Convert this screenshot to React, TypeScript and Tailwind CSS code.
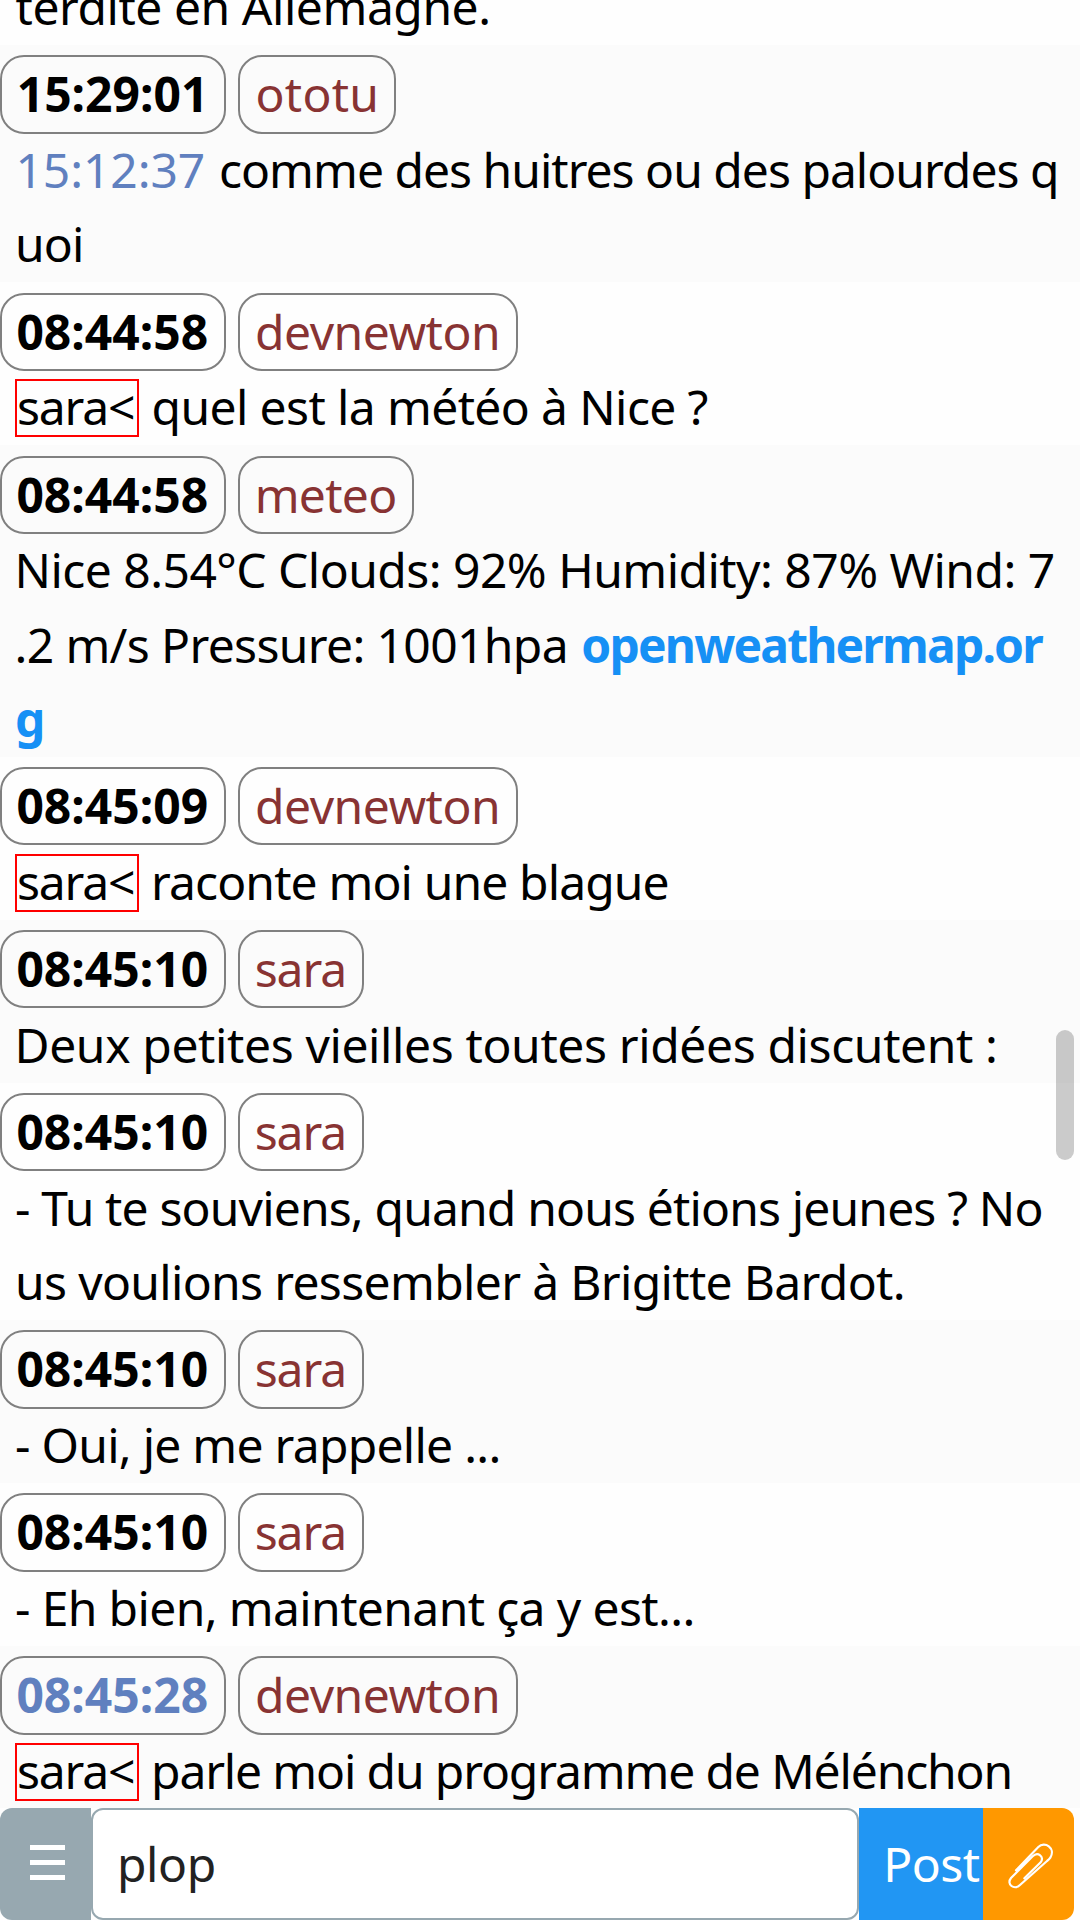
import React from "react";

type Segment = { text: string; className: string };
type Post = {
  time: string;
  timeClass: string;
  nick: string;
  nickClass: string;
  lines: Segment[][];
};

const sara: Segment = {
  text: "sara<",
  className: "mt-[1px] h-[58px] w-[124px] border-2 border-[#ff0000] leading-[52px] tracking-[-1.18px]",
};

const clock = "pl-[14.4px]";
const nicks = {
  ototu: "w-[157.7px] pl-[15.3px] tracking-[0.24px]",
  devnewton: "w-[279.7px] pl-[14.8px] tracking-[-0.5px]",
  meteo: "w-[175.5px] pl-[14.4px] tracking-[-0.71px]",
  sara: "w-[125.5px] pl-[14.4px] tracking-[-1.1px]",
};

const posts: Post[] = [
  {
    time: "15:29:01",
    timeClass: "pl-[14.7px]",
    nick: "ototu",
    nickClass: nicks.ototu,
    lines: [
      [
        { text: "15:12:37", className: "ml-[0.5px] w-[203.5px] text-[#6080bf] tracking-[-0.1px]" },
        { text: "comme des huitres ou des palourdes q", className: "tracking-[-0.99px]" },
      ],
      [{ text: "uoi", className: "tracking-[-0.85px]" }],
    ],
  },
  {
    time: "08:44:58",
    timeClass: clock,
    nick: "devnewton",
    nickClass: nicks.devnewton,
    lines: [[sara, { text: "quel est la météo à Nice ?", className: "ml-[12.6px] tracking-[-0.62px]" }]],
  },
  {
    time: "08:44:58",
    timeClass: clock,
    nick: "meteo",
    nickClass: nicks.meteo,
    lines: [
      [{ text: "Nice 8.54°C Clouds: 92% Humidity: 87% Wind: 7", className: "-ml-[0.5px] tracking-[-0.54px]" }],
      [
        { text: ".2 m/s Pressure: 1001hpa", className: "-ml-[0.5px] w-[566.8px] tracking-[-0.64px]" },
        { text: "openweathermap.or", className: "font-bold text-[#1690f5] tracking-[-1.83px]" },
      ],
      [{ text: "g", className: "font-bold text-[#1690f5]" }],
    ],
  },
  {
    time: "08:45:09",
    timeClass: clock,
    nick: "devnewton",
    nickClass: nicks.devnewton,
    lines: [[sara, { text: "raconte moi une blague", className: "ml-[12px] tracking-[-0.88px]" }]],
  },
  {
    time: "08:45:10",
    timeClass: clock,
    nick: "sara",
    nickClass: nicks.sara,
    lines: [[{ text: "Deux petites vieilles toutes ridées discutent :", className: "-ml-[0.5px] tracking-[-0.38px]" }]],
  },
  {
    time: "08:45:10",
    timeClass: clock,
    nick: "sara",
    nickClass: nicks.sara,
    lines: [
      [{ text: "- Tu te souviens, quand nous étions jeunes ? No", className: "tracking-[-0.85px]" }],
      [{ text: "us voulions ressembler à Brigitte Bardot.", className: "tracking-[-0.66px]" }],
    ],
  },
  {
    time: "08:45:10",
    timeClass: clock,
    nick: "sara",
    nickClass: nicks.sara,
    lines: [[{ text: "- Oui, je me rappelle ...", className: "tracking-[-0.74px]" }]],
  },
  {
    time: "08:45:10",
    timeClass: clock,
    nick: "sara",
    nickClass: nicks.sara,
    lines: [[{ text: "- Eh bien, maintenant ça y est...", className: "tracking-[-0.63px]" }]],
  },
  {
    time: "08:45:28",
    timeClass: "pl-[14.4px] text-[#6080bf]",
    nick: "devnewton",
    nickClass: nicks.devnewton,
    lines: [[sara, { text: "parle moi du programme de Mélénchon", className: "ml-[12px] tracking-[-1.14px]" }]],
  },
];

function PostRow({ post, shaded }: { post: Post; shaded: boolean }) {
  return (
    <article className={`shrink-0 pb-[0.5px] ${shaded ? "bg-[#fbfbfb]" : "bg-[#fefefe]"}`}>
      <header className="flex h-[88.2px] gap-[12.3px] pt-[10.3px]">
        <time
          className={`h-[78.3px] w-[226px] shrink-0 rounded-[24px] border-2 border-[#808080] font-bold leading-[73.7px] ${post.timeClass}`}
        >
          {post.time}
        </time>
        <span
          className={`h-[78.3px] shrink-0 rounded-[24px] border-2 border-[#808080] leading-[73.7px] text-[#883333] ${post.nickClass}`}
        >
          {post.nick}
        </span>
      </header>
      {post.lines.map((line, i) => (
        <p key={i} className="flex h-[74.3px] items-center pl-[15px] leading-[74.3px]">
          {line.map((seg) => (
            <span key={seg.text} className={`shrink-0 whitespace-pre ${seg.className}`}>
              {seg.text}
            </span>
          ))}
        </p>
      ))}
    </article>
  );
}

function Paperclip() {
  return (
    <svg width="46" height="46" viewBox="24 130 138 138" fill="none" stroke="white" strokeWidth="6.5" strokeLinecap="round">
      <path d="M48 212 L115 142 C134 123 168 145 151 174 Q148 179 141 184 L60 256 C43 273 18 254 33 235 L98 170 C113 155 135 171 122 188 L73 236" />
    </svg>
  );
}

export default function App() {
  return (
    <div className="relative flex h-[1920px] w-[1080px] flex-col overflow-hidden bg-[#fefefe] font-['Noto_Sans',sans-serif] text-[48px] text-black">
      <main className="flex h-[1808px] shrink-0 flex-col overflow-hidden">
        <div className="flex h-[45px] shrink-0 items-end overflow-hidden pb-[0.5px] pl-[15.6px]">
          <p className="shrink-0 whitespace-pre leading-[74.3px] tracking-[-0.46px]">terdite en Allemagne.</p>
        </div>
        {posts.map((post, i) => (
          <PostRow key={i} post={post} shaded={i % 2 === 0} />
        ))}
      </main>

      <footer className="flex h-[112px] w-[1074px] shrink-0">
        <button className="flex w-[91px] flex-col items-center gap-[10px] rounded-l-[12px] bg-[#97a8b0] pt-[37px] pl-[4px]">
          <span className="h-[5px] w-[35px] bg-white" />
          <span className="h-[5px] w-[35px] bg-white" />
          <span className="h-[5px] w-[35px] bg-white" />
        </button>
        <div className="w-[768px] rounded-[12px] border-2 border-[#97a8b0] bg-white pl-[24px] leading-[107px] tracking-[-0.4px] text-[#222222]">
          plop
        </div>
        <button className="w-[124px] bg-[#2196f3] pb-[1px] pl-[24.3px] text-left tracking-[-0.56px] text-white">
          Post
        </button>
        <button className="flex w-[91px] items-start rounded-r-[12px] bg-[#ff9800] pt-[35px] pl-[25px]">
          <Paperclip />
        </button>
      </footer>

      <div className="absolute top-[1030px] left-[1056px] h-[130px] w-[18px] rounded-full bg-black/20" />
    </div>
  );
}
